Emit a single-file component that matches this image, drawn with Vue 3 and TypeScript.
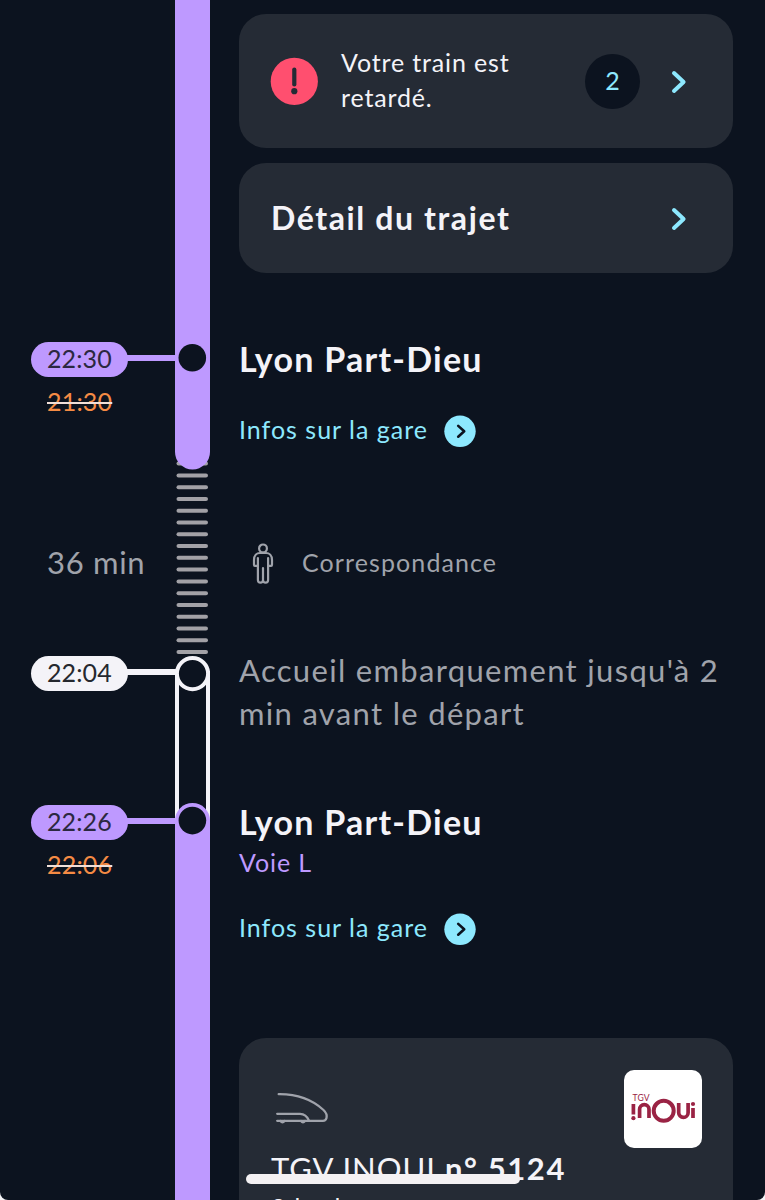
<script setup lang="ts">
interface TimeStop {
  id: string
  time: string
  previous?: string
  tone: 'violet' | 'white'
}

const stops: TimeStop[] = [
  { id: 'arrival', time: '22:30', previous: '21:30', tone: 'violet' },
  { id: 'boarding', time: '22:04', tone: 'white' },
  { id: 'departure', time: '22:26', previous: '22:06', tone: 'violet' },
]

const ticks: number[] = Array.from({ length: 17 }, (_, i) => 461.6 + i * 11.78)
</script>

<template>
  <div class="screen">
    <main class="journey">
      <aside class="times">
        <div v-for="stop in stops" :key="stop.id" class="stop" :class="[stop.id, stop.tone]">
          <div class="stop-row">
            <span class="pill">{{ stop.time }}</span>
            <span class="stub"></span>
          </div>
          <span v-if="stop.previous" class="previous"><span class="t">{{ stop.previous }}</span></span>
          <span v-if="stop.id === 'arrival'" class="duration">36 min</span>
        </div>
      </aside>

      <svg class="rail" width="35" height="1200" viewBox="0 0 35 1200">
        <rect v-for="y in ticks" :key="y" x="1.5" :y="y" width="31.5" height="4" rx="2" fill="#a2a1a6" />
        <path d="M0 0H35V452A17.5 17.5 0 0 1 0 452Z" fill="#be99ff" />
        <circle cx="17.3" cy="357.7" r="13.8" fill="#0c131f" />
        <path d="M2 674V822M33 674V822" stroke="#f4f3f8" stroke-width="4" />
        <circle cx="17.5" cy="673.6" r="15.6" fill="#0c131f" stroke="#f4f3f8" stroke-width="4" />
        <path d="M0 1200V820.5A17.5 17.5 0 0 1 35 820.5V1200Z" fill="#be99ff" />
        <circle cx="17.4" cy="820.6" r="13.8" fill="#0c131f" />
      </svg>

      <section class="content">
        <article class="card alert">
          <svg class="warn" width="48" height="48" viewBox="0 0 48 48">
            <circle cx="24.3" cy="24.4" r="23.6" fill="#ff4f6f" />
            <path d="M24.3 12.6V27.4" stroke="#252b35" stroke-width="4.2" stroke-linecap="round" />
            <circle cx="24.3" cy="34.2" r="3.1" fill="#252b35" />
          </svg>
          <p class="alert-text">Votre train est<br />retardé.</p>
          <span class="count">2</span>
          <svg class="chevron" width="16" height="24" viewBox="0 0 16 24">
            <path d="M3 3L12.6 12L3 21" />
          </svg>
        </article>

        <article class="card detail">
          <h2>Détail du trajet</h2>
          <svg class="chevron" width="16" height="24" viewBox="0 0 16 24">
            <path d="M3 3L12.6 12L3 21" />
          </svg>
        </article>

        <h1 class="station first">Lyon Part-Dieu</h1>
        <a class="info one">
          <span>Infos sur la gare</span>
          <svg width="32" height="32" viewBox="0 0 32 32">
            <circle cx="16" cy="16.3" r="15.7" fill="#8de8fe" />
            <path d="M14.2 10.9L20.2 16.3L14.2 21.7" />
          </svg>
        </a>

        <div class="transfer">
          <svg width="22" height="42" viewBox="0 0 22 42">
            <circle cx="11" cy="5.4" r="3.9" />
            <path d="M5.7 22.8H2.9Q2 22.8 2 21.7V17C2 12.5 4.8 10 8 10H14C17.2 10 20 12.5 20 17V21.7Q20 22.8 19.1 22.8H16.3" />
            <path d="M5.9 15V37Q5.9 39.6 8.4 39.6Q11 39.6 11 37V25M11 37Q11 39.6 13.6 39.6Q16.1 39.6 16.1 37V15" />
          </svg>
          <span>Correspondance</span>
        </div>

        <p class="boarding-text">Accueil embarquement jusqu'à 2<br />min avant le départ</p>

        <h1 class="station second">Lyon Part-Dieu</h1>
        <p class="track">Voie L</p>
        <a class="info two">
          <span>Infos sur la gare</span>
          <svg width="32" height="32" viewBox="0 0 32 32">
            <circle cx="16" cy="16.3" r="15.7" fill="#8de8fe" />
            <path d="M14.2 10.9L20.2 16.3L14.2 21.7" />
          </svg>
        </a>

        <article class="card train">
          <header class="train-head">
            <svg width="56" height="34" viewBox="0 0 56 34">
              <path d="M4.7 2.2C23 2 38 7.5 49.5 18C52.5 20.8 53.2 23 52.5 26C52 28 51.2 28.8 49 28.8H3.2" />
              <path d="M3.2 21.8H26C31 21.8 33.5 25 35 28.6M6.5 29Q8.5 31.5 10.5 29M27 29Q29 31.5 31 29" />
            </svg>
            <div class="brand">
              <svg width="78" height="78" viewBox="0 0 78 78">
                <text x="8.6" y="31" font-size="8.6" textLength="17" fill="#9a2344">TGV</text>
                <g fill="none" stroke="#9a2344" stroke-width="3.7">
                  <path d="M9.4 34V44.5M15.6 48V39.3A4.7 4.7 0 0 1 25 39.300V48M54.700 33V42.700A4.700 4.700 0 0 0 64.100 42.700V33M69 38V48" />
                  <circle cx="39.700" cy="40.800" r="10" stroke-width="4" />
                </g>
                <circle cx="9.400" cy="48.200" r="2.100" fill="#9a2344" />
                <circle cx="69" cy="34" r="2.100" fill="#9a2344" />
              </svg>
            </div>
          </header>
          <p class="train-name"><span>TGV INOUI</span> <strong>n° 5124</strong></p>
          <p class="train-sub">2de classe</p>
        </article>
      </section>
    </main>
    <div class="home-bar"></div>
  </div>
</template>

<style>
html,
body {
  background: #f4f4f6;
}
</style>

<style scoped>
.screen {
  position: relative;
  width: 765px;
  height: 1200px;
  overflow: hidden;
  background: #0c131f;
  border-radius: 0 0 8px 8px;
  color: #f4f3f8;
  font-family: Lato, "Open Sans", sans-serif;
  font-size: 25px;
}
p,
h1,
h2 {
  margin: 0;
  white-space: nowrap;
}
.journey {
  display: grid;
  grid-template-columns: 175px 35px 1fr;
  height: 1200px;
}
.rail {
  display: block;
}
.times {
  display: flex;
  flex-direction: column;
  padding-top: 342px;
}
.stop {
  display: flex;
  flex-direction: column;
  height: 149px;
}
.stop.arrival {
  height: 314px;
}
.stop-row {
  display: flex;
  height: 35px;
  padding-left: 31px;
}
.pill {
  box-sizing: border-box;
  width: 97px;
  height: 35px;
  padding-left: 16px;
  border-radius: 18px;
  line-height: 32px;
  color: #2b2840;
  letter-spacing: 0.1px;
}
.white .pill {
  color: #25282e;
}
.stub {
  width: 49px;
  height: 6px;
  margin: 12.5px -1px 0 -1px;
}
.violet .pill,
.violet .stub {
  background: #be99ff;
}
.white .pill,
.white .stub {
  background: #f4f3f8;
}
.previous {
  align-self: flex-start;
  margin: 8px 0 0 47px;
  height: 32px;
  line-height: 32px;
  color: #f58b44;
  letter-spacing: 0.2px;
}
.previous .t {
  display: block;
  width: 65px;
  height: 32px;
  text-decoration: line-through;
  text-decoration-color: #f1dfd8;
  text-decoration-thickness: 2px;
}
.duration {
  margin: 125px 0 0 47px;
  line-height: 40px;
  font-size: 31px;
  color: #a0a3ab;
  letter-spacing: 0.7px;
}
.content {
  display: flex;
  flex-direction: column;
  padding: 14px 32px 0 29px;
}
.card {
  box-sizing: border-box;
  flex-shrink: 0;
  width: 494px;
  border-radius: 27px;
  background: #252b35;
}
.alert {
  display: flex;
  align-items: center;
  height: 134px;
  padding: 0 46px 0 31px;
}
.alert-text {
  flex: 1;
  margin: -3px 0 0 23px;
  line-height: 35px;
  letter-spacing: 0.85px;
}
.count {
  width: 55px;
  height: 55px;
  margin-right: 31px;
  border-radius: 50%;
  background: #0c131f;
  color: #8de8fe;
  line-height: 52px;
  text-align: center;
}
.chevron {
  margin-top: 1px;
}
.chevron path {
  fill: none;
  stroke: #8de8fe;
  stroke-width: 4;
  stroke-linecap: round;
  stroke-linejoin: round;
}
.detail {
  display: flex;
  align-items: center;
  justify-content: space-between;
  height: 110px;
  margin-top: 15px;
  padding: 0 46px 0 32px;
}
.detail h2 {
  margin-top: -2px;
  font-size: 32px;
  font-weight: 700;
  letter-spacing: 1.6px;
}
.station {
  height: 44px;
  line-height: 42px;
  font-size: 34px;
  font-weight: 700;
  letter-spacing: 1.25px;
}
.first {
  margin-top: 65px;
}
.info {
  display: flex;
  align-items: center;
  height: 32px;
  color: #8de8fe;
  letter-spacing: 1px;
}
.info span {
  width: 204.5px;
  margin-top: -4px;
  line-height: 32px;
  white-space: nowrap;
}
.info path {
  fill: none;
  stroke: #0c131f;
  stroke-width: 2.6;
  stroke-linecap: round;
  stroke-linejoin: round;
}
.one {
  margin-top: 33px;
}
.transfer {
  display: flex;
  align-items: center;
  height: 42px;
  margin-top: 96px;
  padding-left: 13px;
  color: #a0a3ab;
  letter-spacing: 1.1px;
}
.transfer svg {
  fill: none;
  stroke: #a0a3ab;
  stroke-width: 2.2;
  stroke-linecap: round;
  stroke-linejoin: round;
}
.transfer span {
  margin: -4px 0 0 28px;
}
.boarding-text {
  margin-top: 64px;
  color: #a0a3ab;
  font-size: 31px;
  line-height: 43px;
  letter-spacing: 1.32px;
}
.second {
  margin-top: 66px;
}
.track {
  height: 36px;
  line-height: 35px;
  color: #be99ff;
  letter-spacing: 0.9px;
}
.two {
  margin-top: 32px;
}
.train {
  height: 200px;
  margin-top: 93px;
  padding: 32px 31px 0 32px;
}
.train-head {
  display: flex;
  justify-content: space-between;
}
.train-head > svg {
  margin: 22px 0 0 3px;
  fill: none;
  stroke: #a0a3ab;
  stroke-width: 2.3;
  stroke-linecap: round;
  stroke-linejoin: round;
}
.brand {
  height: 78px;
  width: 78px;
  border-radius: 10px;
  background: #fff;
}
.brand svg {
  display: block;
}
.train-name {
  height: 42px;
  line-height: 40px;
  font-size: 31px;
  letter-spacing: 1px;
}
.train-name strong {
  letter-spacing: 1.6px;
}
.train-sub {
  line-height: 34px;
  letter-spacing: 0.7px;
}
.home-bar {
  position: absolute;
  left: 246px;
  top: 1174px;
  width: 274px;
  height: 10px;
  border-radius: 5px;
  background: #f4f1f3;
}
</style>
